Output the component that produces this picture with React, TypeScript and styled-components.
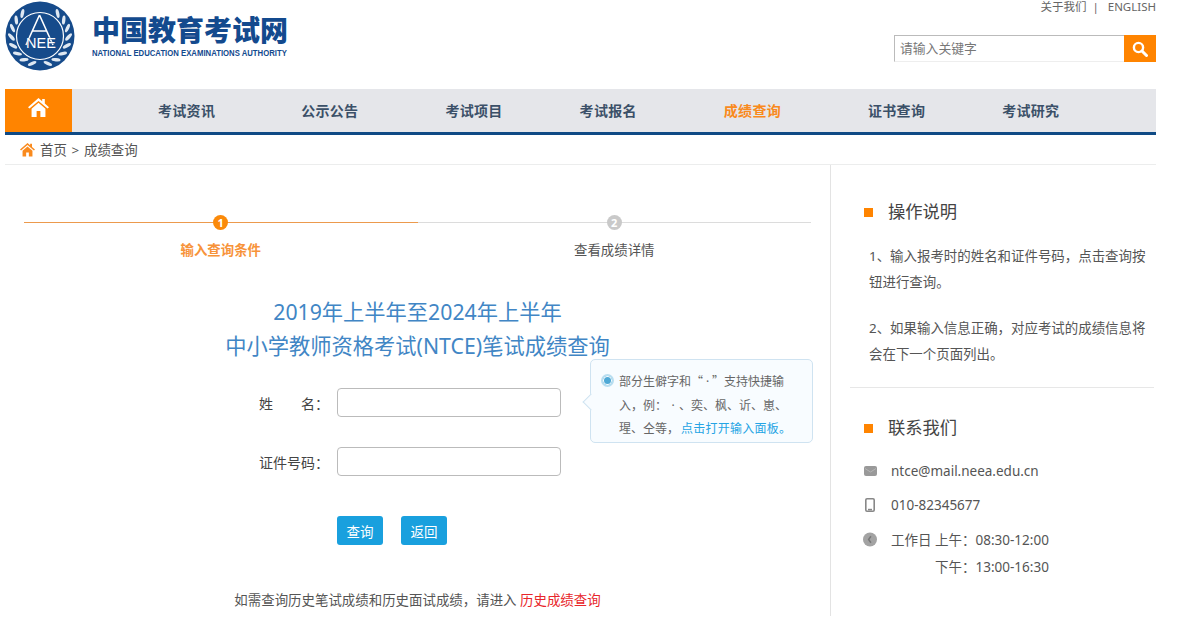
import React from "react";
import styled, { createGlobalStyle } from "styled-components";

const GlobalStyle = createGlobalStyle`
  html, body {
    margin: 0;
    padding: 0;
    background: #fff;
    font-family: "Noto Sans", "Noto Sans CJK SC", sans-serif;
    color: #555;
    overflow: hidden;
  }
  * { box-sizing: border-box; }
`;

const Page = styled.div`
  width: 1181px;
  height: 631px;
  padding-left: 5px;
  overflow: hidden;
`;

const Wrap = styled.div`
  width: 1151px;
`;

const Header = styled.header`
  height: 89px;
  display: flex;
  justify-content: space-between;
`;

const Brand = styled.div`
  display: flex;
  padding-top: 1px;
`;

const BrandText = styled.div`
  margin-left: 17px;
  padding-top: 12px;
  color: #134a8e;
`;

const BrandTitle = styled.div`
  font-size: 28px;
  line-height: 35px;
  font-weight: 900;
  white-space: nowrap;
`;

const BrandSub = styled.div`
  font-family: "Liberation Sans", sans-serif;
  font-size: 9.5px;
  line-height: 9px;
  font-weight: 700;
  white-space: nowrap;
  transform-origin: left;
  transform: scaleX(0.815);
`;

const HeaderRight = styled.div`
  display: flex;
  flex-direction: column;
  align-items: flex-end;
`;

const TopLinks = styled.div`
  font-size: 11.5px;
  line-height: 13px;
  color: #666;
  display: flex;
  height: 35px;
`;

const Sep = styled.span`
  margin: 0 9px 0 6px;
`;

const Search = styled.div`
  width: 262px;
  height: 27px;
  display: flex;
  border-top: 1px solid #bbb;
  border-left: 1px solid #bbb;
  border-bottom: 1px solid #eee;
`;

const SearchText = styled.div`
  flex: 1;
  font-size: 12.8px;
  line-height: 25px;
  padding-left: 5px;
  color: #777;
`;

const SearchButton = styled.div`
  width: 32px;
  height: 27px;
  margin-top: -1px;
  background: #ff8400;
  display: flex;
  align-items: center;
  justify-content: center;
`;

const Nav = styled.nav`
  height: 46px;
  background: #e5e6ea;
  border-bottom: 3px solid #0f4a85;
  display: flex;
  align-items: center;
`;

const HomeTab = styled.div`
  width: 67px;
  height: 43px;
  background: #ff8400;
  display: flex;
  justify-content: center;
  padding-top: 9px;
  margin-right: 86px;
`;

const NavItem = styled.a<{ $gap: number; $active?: boolean }>`
  font-size: 14px;
  line-height: 45px;
  font-weight: 700;
  letter-spacing: 0.3px;
  white-space: nowrap;
  color: ${(p) => (p.$active ? "#f98a1d" : "#3b5068")};
  margin-right: ${(p) => p.$gap}px;
`;

const Crumb = styled.div`
  height: 30px;
  border-bottom: 1px solid #eceded;
  display: flex;
  align-items: center;
  padding-left: 15px;
  gap: 5px;
  font-size: 13.44px;
  word-spacing: 1.2px;
  color: #555;
  padding-bottom: 1px;

  svg {
    margin-top: 2px;
  }
`;

const Body = styled.div`
  display: flex;
  height: 451px;
`;

const Main = styled.main`
  position: relative;
  width: 826px;
  border-right: 1px solid #e3e3e3;
  padding: 50px 0 0 19px;
`;

const Steps = styled.div`
  width: 787px;
  display: flex;
`;

const Step = styled.div`
  width: 393.5px;
  display: flex;
  flex-direction: column;
  align-items: center;
  position: relative;
`;

const StepLine = styled.div<{ $on?: boolean }>`
  position: absolute;
  left: 0;
  right: 0;
  top: 7px;
  height: 1px;
  background: ${(p) => (p.$on ? "#ec9a4d" : "#dcdcdc")};
`;

const StepDot = styled.div<{ $on?: boolean }>`
  position: relative;
  width: 15px;
  height: 15px;
  border-radius: 50%;
  background: ${(p) => (p.$on ? "#fb8a0a" : "#c9c9c9")};
  color: #fff;
  font-size: 11px;
  font-weight: 700;
  line-height: 15px;
  text-align: center;
`;

const StepLabel = styled.div<{ $on?: boolean }>`
  margin-top: 10px;
  font-size: 13.4px;
  line-height: 20px;
  font-weight: ${(p) => (p.$on ? 700 : 400)};
  color: ${(p) => (p.$on ? "#f7933a" : "#555")};
`;

const Title = styled.h1`
  margin: 35px 0 0;
  width: 787px;
  text-align: center;
  font-size: 21.25px;
  line-height: 34px;
  font-weight: 400;
  color: #4186c5;
`;

const Form = styled.form`
  margin-top: 25px;
`;

const Field = styled.div`
  display: flex;
  align-items: center;
  margin-bottom: 30px;
`;

const FieldLabel = styled.label`
  width: 313px;
  padding-right: 8px;
  font-size: 14px;
  color: #444;
  display: flex;
  justify-content: flex-end;
`;

const NameLabel = styled.span`
  width: 70px;
  display: flex;
  justify-content: space-between;
`;

const Input = styled.input`
  width: 224px;
  height: 29px;
  border: 1px solid #bbb;
  border-radius: 4px;
  background: #fff;
  outline: none;
`;

const Buttons = styled.div`
  display: flex;
  gap: 18px;
  padding-left: 313px;
  margin-top: 40px;
`;

const Button = styled.button`
  width: 46px;
  height: 29px;
  border: 0;
  padding: 0;
  border-radius: 3px;
  background: #19a0de;
  color: #fff;
  font-family: inherit;
  font-size: 13.5px;
`;

const History = styled.p`
  margin: 43px 0 0;
  width: 787px;
  text-align: center;
  font-size: 13.44px;
  line-height: 24px;
  color: #555;
`;

const HistoryLink = styled.a`
  color: #e8262a;
`;

const Tip = styled.div`
  position: absolute;
  left: 585px;
  top: 194px;
  width: 223px;
  height: 84px;
  background: #f8fcff;
  border: 1px solid #cfe3f1;
  border-radius: 5px;
  padding: 10px 0 0 28px;
  font-family: "Noto Sans CJK SC", sans-serif;
  font-size: 12px;
  line-height: 22.5px;
  color: #666;
  white-space: nowrap;

  &::before {
    content: "";
    position: absolute;
    left: -6px;
    top: 36px;
    width: 11px;
    height: 11px;
    background: #f8fcff;
    border-left: 1px solid #cfe3f1;
    border-bottom: 1px solid #cfe3f1;
    transform: rotate(45deg);
  }
`;

const TipDot = styled.span`
  position: absolute;
  left: 10px;
  top: 14px;
  width: 13px;
  height: 13px;
  border-radius: 50%;
  border: 2px solid #b9def0;
  background: #4fa9d6;
  box-shadow: inset 0 0 0 1px #fff;
`;

const TipMid = styled.span<{ $wide?: boolean }>`
  display: inline-block;
  width: ${(p) => (p.$wide ? 12 : 9)}px;
  text-align: center;
  font-family: "Noto Sans", sans-serif;
`;

const TipLink = styled.a`
  margin-left: 2px;
  letter-spacing: 0.25px;
  color: #25a4e4;
`;

const Side = styled.aside`
  width: 325px;
  padding: 0 2px 0 19px;
`;

const SideBlock = styled.section<{ $line?: boolean }>`
  padding-top: ${(p) => (p.$line ? 25 : 32)}px;
  padding-bottom: ${(p) => (p.$line ? 0 : 20)}px;
  border-bottom: ${(p) => (p.$line ? "0" : "1px solid #e7e7e7")};
`;

const SideTitle = styled.h2<{ $tight?: boolean }>`
  margin: 0 0 ${(p) => (p.$tight ? 11 : 16)}px;
  padding-left: 14px;
  display: flex;
  align-items: center;
  gap: 15px;
  font-size: 17.3px;
  line-height: 30px;
  font-weight: 400;
  color: #444;

  &::before {
    content: "";
    width: 9px;
    height: 9px;
    background: #ff8400;
  }
`;

const SideText = styled.p`
  margin: 0 0 20px 19px;
  width: 282px;
  font-size: 13.44px;
  line-height: 26px;
  color: #555;
  &:last-child {
    margin-bottom: 0;
  }
`;

const ContactRow = styled.div`
  display: flex;
  align-items: center;
  height: 34px;
  padding-left: 13px;
  gap: 14px;
  font-size: 13.5px;
  color: #555;
`;

const IconSlot = styled.span`
  width: 14px;
  display: flex;
  justify-content: center;
`;

const HoursLine = styled.div`
  height: 27px;
  line-height: 27px;
  margin: -2px 0 0 85px;
  font-size: 13.5px;
  color: #555;
`;

const leafAngles = [38, 56, 74, 92, 110, 128, 146, 164];

const Logo = () => (
  <svg width="70" height="70" viewBox="0 0 70 70">
    <circle cx="35" cy="35" r="34.5" fill="#164b8b" />
    {leafAngles.map((a) => (
      <g key={a} fill="#dfe8f2">
        <ellipse cx="35" cy="6.4" rx="1.7" ry="4.6" transform={`rotate(${a} 35 35) rotate(-50 35 6.4)`} />
        <ellipse cx="35" cy="6.4" rx="1.7" ry="4.6" transform={`rotate(${-a} 35 35) rotate(50 35 6.4)`} />
      </g>
    ))}
    <circle cx="35" cy="35" r="23.5" fill="#164b8b" stroke="#fff" strokeWidth="1.2" />
    <path d="M34.5 14 L21 44 M34.5 14 L48 44 M27.5 30 L41.5 30" stroke="#fff" strokeWidth="1.6" fill="none" />
    <text
      x="36"
      y="47"
      textAnchor="middle"
      fontFamily="Liberation Sans, sans-serif"
      fontSize="14.5"
      fill="#fff"
      stroke="#164b8b"
      strokeWidth="0.5"
      paintOrder="stroke"
    >
      NEE
    </text>
  </svg>
);

const HomeGlyph = ({ size, color }: { size: number; color: string }) => (
  <svg width={size} height={size * 0.9} viewBox="0 0 20 18">
    <path d="M10 0 L13.5 3 V1 H16 V5.2 L20 8.8 L18.6 10 L10 2.8 L1.4 10 L0 8.8 Z" fill={color} />
    <path d="M3.4 10.2 L10 4.6 L16.6 10.2 V18 H11.8 V12.5 H8.2 V18 H3.4 Z" fill={color} />
  </svg>
);

export default function App() {
  return (
    <Page>
      <GlobalStyle />
      <Wrap>
        <Header>
          <Brand>
            <Logo />
            <BrandText>
              <BrandTitle>中国教育考试网</BrandTitle>
              <BrandSub>NATIONAL EDUCATION EXAMINATIONS AUTHORITY</BrandSub>
            </BrandText>
          </Brand>
          <HeaderRight>
            <TopLinks>
              <span>关于我们</span>
              <Sep>|</Sep>
              <span>ENGLISH</span>
            </TopLinks>
            <Search>
              <SearchText>请输入关键字</SearchText>
              <SearchButton>
                <svg width="16" height="16" viewBox="0 0 16 16">
                  <circle cx="6.5" cy="6.5" r="4.6" fill="none" stroke="#fff" strokeWidth="2.4" />
                  <path d="M10 10 L14.5 14.5" stroke="#fff" strokeWidth="3" strokeLinecap="round" />
                </svg>
              </SearchButton>
            </Search>
          </HeaderRight>
        </Header>
        <Nav>
          <HomeTab>
            <HomeGlyph size={21} color="#fff" />
          </HomeTab>
          <NavItem $gap={86}>考试资讯</NavItem>
          <NavItem $gap={87}>公示公告</NavItem>
          <NavItem $gap={77}>考试项目</NavItem>
          <NavItem $gap={87}>考试报名</NavItem>
          <NavItem $gap={87} $active>成绩查询</NavItem>
          <NavItem $gap={77}>证书查询</NavItem>
          <NavItem $gap={0}>考试研究</NavItem>
        </Nav>
        <Crumb>
          <HomeGlyph size={15} color="#f98a1d" />
          <span>首页 &gt; 成绩查询</span>
        </Crumb>
        <Body>
          <Main>
            <Steps>
              <Step>
                <StepLine $on />
                <StepDot $on>1</StepDot>
                <StepLabel $on>输入查询条件</StepLabel>
              </Step>
              <Step>
                <StepLine />
                <StepDot>2</StepDot>
                <StepLabel>查看成绩详情</StepLabel>
              </Step>
            </Steps>
            <Title>
              2019年上半年至2024年上半年
              <br />
              中小学教师资格考试(NTCE)笔试成绩查询
            </Title>
            <Form>
              <Field>
                <FieldLabel>
                  <NameLabel>
                    <span>姓</span>
                    <span>名：</span>
                  </NameLabel>
                </FieldLabel>
                <Input />
              </Field>
              <Field>
                <FieldLabel>证件号码：</FieldLabel>
                <Input />
              </Field>
              <Buttons>
                <Button type="button">查询</Button>
                <Button type="button">返回</Button>
              </Buttons>
            </Form>
            <History>
              如需查询历史笔试成绩和历史面试成绩，请进入 <HistoryLink>历史成绩查询</HistoryLink>
            </History>
            <Tip>
              <TipDot />
              部分生僻字和“<TipMid>·</TipMid>”支持快捷输
              <br />
              入，例：<TipMid $wide>·</TipMid>、奕、枫、䜣、崽、
              <br />
              瑆、仝等，<TipLink>点击打开输入面板。</TipLink>
            </Tip>
          </Main>
          <Side>
            <SideBlock>
              <SideTitle>操作说明</SideTitle>
              <SideText>1、输入报考时的姓名和证件号码，点击查询按钮进行查询。</SideText>
              <SideText>2、如果输入信息正确，对应考试的成绩信息将会在下一个页面列出。</SideText>
            </SideBlock>
            <SideBlock $line>
              <SideTitle $tight>联系我们</SideTitle>
              <ContactRow>
                <IconSlot>
                  <svg width="13" height="10" viewBox="0 0 13 10">
                    <rect width="13" height="10" rx="2" fill="#999" />
                    <path d="M1 2.5 L6.5 6 L12 2.5" stroke="#b5b5b5" fill="none" />
                  </svg>
                </IconSlot>
                ntce@mail.neea.edu.cn
              </ContactRow>
              <ContactRow>
                <IconSlot>
                  <svg width="10" height="14" viewBox="0 0 10 14">
                    <rect x="0.8" y="0.8" width="8.4" height="12.4" rx="1.2" fill="none" stroke="#888" strokeWidth="1.6" />
                    <rect x="3" y="10.8" width="4" height="1.6" fill="#888" />
                  </svg>
                </IconSlot>
                010-82345677
              </ContactRow>
              <ContactRow>
                <IconSlot>
                  <svg width="15" height="15" viewBox="0 0 15 15">
                    <circle cx="7.5" cy="7.5" r="7.5" fill="#a3a3a3" />
                    <path d="M8.5 4 L6 7.5 L8.5 11" stroke="#777" strokeWidth="1.6" fill="none" />
                  </svg>
                </IconSlot>
                工作日 上午：08:30-12:00
              </ContactRow>
              <HoursLine>下午：13:00-16:30</HoursLine>
            </SideBlock>
          </Side>
        </Body>
      </Wrap>
    </Page>
  );
}
